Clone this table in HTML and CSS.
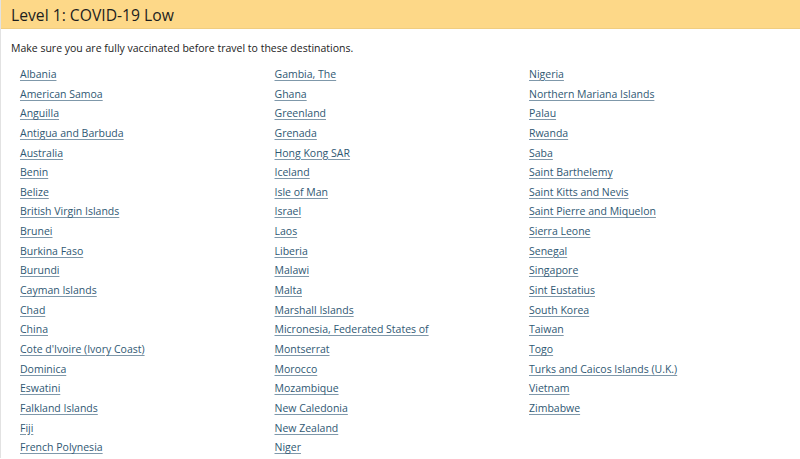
FILE: index.html
```html
<!DOCTYPE html>
<html lang="en">
<head>
<meta charset="utf-8">
<title>Level 1: COVID-19 Low</title>
<link rel="stylesheet" href="styles.css">
</head>
<body>
<section class="panel">
  <h2 class="panel-title">Level 1: COVID-19 Low</h2>
  <div class="panel-body">
    <p class="intro">Make sure you are fully vaccinated before travel to these destinations.</p>
    <ul class="dest-list">
      <li><a href="#">Albania</a></li>
      <li><a href="#">American Samoa</a></li>
      <li><a href="#">Anguilla</a></li>
      <li><a href="#">Antigua and Barbuda</a></li>
      <li><a href="#">Australia</a></li>
      <li><a href="#">Benin</a></li>
      <li><a href="#">Belize</a></li>
      <li><a href="#">British Virgin Islands</a></li>
      <li><a href="#">Brunei</a></li>
      <li><a href="#">Burkina Faso</a></li>
      <li><a href="#">Burundi</a></li>
      <li><a href="#">Cayman Islands</a></li>
      <li><a href="#">Chad</a></li>
      <li><a href="#">China</a></li>
      <li><a href="#">Cote d'Ivoire (Ivory Coast)</a></li>
      <li><a href="#">Dominica</a></li>
      <li><a href="#">Eswatini</a></li>
      <li><a href="#">Falkland Islands</a></li>
      <li><a href="#">Fiji</a></li>
      <li><a href="#">French Polynesia</a></li>
      <li><a href="#">Gambia, The</a></li>
      <li><a href="#">Ghana</a></li>
      <li><a href="#">Greenland</a></li>
      <li><a href="#">Grenada</a></li>
      <li><a href="#">Hong Kong SAR</a></li>
      <li><a href="#">Iceland</a></li>
      <li><a href="#">Isle of Man</a></li>
      <li><a href="#">Israel</a></li>
      <li><a href="#">Laos</a></li>
      <li><a href="#">Liberia</a></li>
      <li><a href="#">Malawi</a></li>
      <li><a href="#">Malta</a></li>
      <li><a href="#">Marshall Islands</a></li>
      <li><a href="#">Micronesia, Federated States of</a></li>
      <li><a href="#">Montserrat</a></li>
      <li><a href="#">Morocco</a></li>
      <li><a href="#">Mozambique</a></li>
      <li><a href="#">New Caledonia</a></li>
      <li><a href="#">New Zealand</a></li>
      <li><a href="#">Niger</a></li>
      <li><a href="#">Nigeria</a></li>
      <li><a href="#">Northern Mariana Islands</a></li>
      <li><a href="#">Palau</a></li>
      <li><a href="#">Rwanda</a></li>
      <li><a href="#">Saba</a></li>
      <li><a href="#">Saint Barthelemy</a></li>
      <li><a href="#">Saint Kitts and Nevis</a></li>
      <li><a href="#">Saint Pierre and Miquelon</a></li>
      <li><a href="#">Sierra Leone</a></li>
      <li><a href="#">Senegal</a></li>
      <li><a href="#">Singapore</a></li>
      <li><a href="#">Sint Eustatius</a></li>
      <li><a href="#">South Korea</a></li>
      <li><a href="#">Taiwan</a></li>
      <li><a href="#">Togo</a></li>
      <li><a href="#">Turks and Caicos Islands (U.K.)</a></li>
      <li><a href="#">Vietnam</a></li>
      <li><a href="#">Zimbabwe</a></li>
    </ul>
  </div>
</section>
</body>
</html>
```

FILE: styles.css
```css
html, body {
  margin: 0;
  padding: 0;
  background: #ffffff;
}

body {
  font-family: "Open Sans", "Liberation Sans", sans-serif;
  color: #222222;
}

.panel {
  border-left: 1px solid #e2e2e2;
}

.panel-title {
  margin: 0;
  height: 29px;
  box-sizing: border-box;
  padding: 4px 10px 0;
  background: #fdd888;
  border-bottom: 1px solid #f0cd80;
  font-size: 15.7px;
  font-weight: 400;
  line-height: 22px;
  color: #1e1e1e;
}

.panel-body {
  padding: 11px 10px 0;
}

.intro {
  margin: 0 0 9px;
  font-size: 10.5px;
  line-height: 16px;
  color: #222222;
}

.dest-list {
  list-style: none;
  margin: 0;
  padding: 0 0 0 9px;
  display: grid;
  grid-template-columns: repeat(3, 254.5px);
  grid-template-rows: repeat(20, 19.65px);
  grid-auto-flow: column;
}

.dest-list li {
  font-size: 10.5px;
  line-height: 19.65px;
  white-space: nowrap;
}

.dest-list a {
  color: #2f5873;
  text-decoration: underline;
  text-underline-offset: 2px;
  text-decoration-color: #7f98aa;
}
```
